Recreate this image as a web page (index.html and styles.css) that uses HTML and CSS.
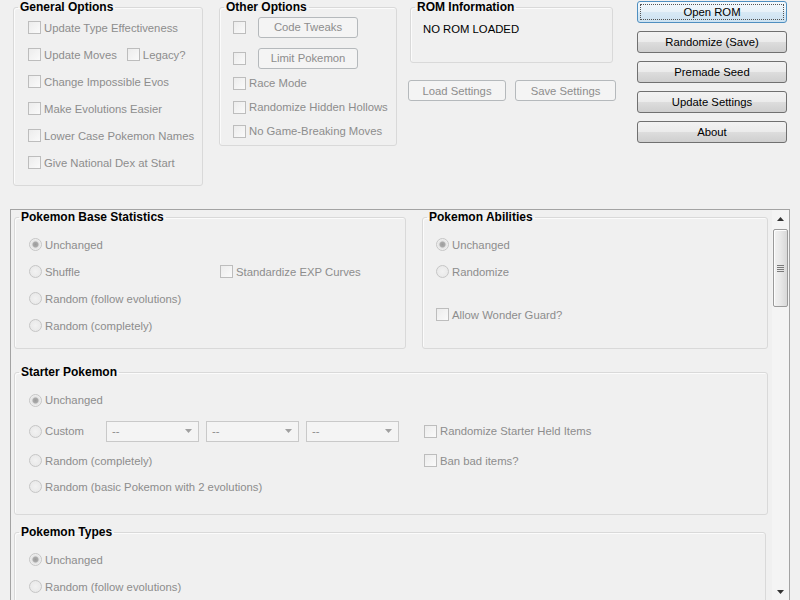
FILE: index.html
```html
<!DOCTYPE html>
<html lang="en">
<head>
    <meta charset="UTF-8">
    <title>Universal Pokemon Randomizer</title>
    <link rel="stylesheet" href="styles.css">
</head>
<body>
    <div class="top">
        <fieldset class="group general">
            <legend>General Options</legend>
            <div class="row"><span class="box"></span>Update Type Effectiveness</div>
            <div class="row"><span class="box"></span>Update Moves<span class="box legacy"></span>Legacy?</div>
            <div class="row"><span class="box"></span>Change Impossible Evos</div>
            <div class="row"><span class="box"></span>Make Evolutions Easier</div>
            <div class="row"><span class="box"></span>Lower Case Pokemon Names</div>
            <div class="row"><span class="box"></span>Give National Dex at Start</div>
        </fieldset>

        <fieldset class="group other">
            <legend>Other Options</legend>
            <div class="row tall"><span class="box"></span><button class="btn off small">Code Tweaks</button></div>
            <div class="row tall second"><span class="box"></span><button class="btn off small">Limit Pokemon</button></div>
            <div class="row short"><span class="box"></span>Race Mode</div>
            <div class="row short"><span class="box"></span>Randomize Hidden Hollows</div>
            <div class="row short"><span class="box"></span>No Game-Breaking Moves</div>
        </fieldset>

        <div class="rom-col">
            <fieldset class="group rom">
                <legend>ROM Information</legend>
                <p class="rom-name">NO ROM LOADED</p>
            </fieldset>
            <div class="settings-row">
                <button class="btn off load">Load Settings</button>
                <button class="btn off save">Save Settings</button>
            </div>
        </div>

        <div class="actions">
            <button class="btn focus">Open ROM</button>
            <button class="btn">Randomize (Save)</button>
            <button class="btn">Premade Seed</button>
            <button class="btn">Update Settings</button>
            <button class="btn">About</button>
        </div>
    </div>

    <div class="panel">
        <div class="panel-body">
            <div class="pair">
                <fieldset class="group stats">
                    <legend>Pokemon Base Statistics</legend>
                    <div class="row"><span class="dot on"></span>Unchanged</div>
                    <div class="row"><span class="cell"><span class="dot"></span>Shuffle</span><span class="box"></span>Standardize EXP Curves</div>
                    <div class="row"><span class="dot"></span>Random (follow evolutions)</div>
                    <div class="row"><span class="dot"></span>Random (completely)</div>
                </fieldset>
                <fieldset class="group abilities">
                    <legend>Pokemon Abilities</legend>
                    <div class="row"><span class="dot on"></span>Unchanged</div>
                    <div class="row"><span class="dot"></span>Randomize</div>
                    <div class="row gap"><span class="box"></span>Allow Wonder Guard?</div>
                </fieldset>
            </div>

            <fieldset class="group starter">
                <legend>Starter Pokemon</legend>
                <div class="row r1"><span class="dot on"></span>Unchanged</div>
                <div class="row r2">
                    <span class="left">
                        <span class="custom"><span class="dot"></span>Custom</span>
                        <span class="combo"><span class="combo-text">--</span><svg width="7" height="4" viewBox="0 0 7 4"><path d="M0 0h7L3.5 4z" fill="#a0a0a0"/></svg></span>
                        <span class="combo"><span class="combo-text">--</span><svg width="7" height="4" viewBox="0 0 7 4"><path d="M0 0h7L3.5 4z" fill="#a0a0a0"/></svg></span>
                        <span class="combo"><span class="combo-text">--</span><svg width="7" height="4" viewBox="0 0 7 4"><path d="M0 0h7L3.5 4z" fill="#a0a0a0"/></svg></span>
                    </span>
                    <span class="box"></span>Randomize Starter Held Items
                </div>
                <div class="row r3"><span class="left"><span class="dot"></span>Random (completely)</span><span class="box"></span>Ban bad items?</div>
                <div class="row r4"><span class="dot"></span>Random (basic Pokemon with 2 evolutions)</div>
            </fieldset>

            <fieldset class="group types">
                <legend>Pokemon Types</legend>
                <div class="row"><span class="dot on"></span>Unchanged</div>
                <div class="row"><span class="dot"></span>Random (follow evolutions)</div>
            </fieldset>
        </div>

        <div class="scrollbar">
            <div class="arrow"><svg width="7" height="4" viewBox="0 0 7 4"><path d="M3.5 0L7 4H0z" fill="#333"/></svg></div>
            <div class="thumb"><span class="grip"></span><span class="grip"></span><span class="grip"></span><span class="grip"></span></div>
            <div class="track"></div>
            <div class="arrow"><svg width="7" height="4" viewBox="0 0 7 4"><path d="M0 0h7L3.5 4z" fill="#333"/></svg></div>
        </div>
    </div>
</body>
</html>
```

FILE: styles.css
```css
* {
    box-sizing: border-box;
}

html, body {
    margin: 0;
    padding: 0;
    height: 600px;
    overflow: hidden;
}

body {
    background: #f0f0f0;
    font-family: 'Liberation Sans', Arial, sans-serif;
    font-size: 11.3px;
    color: #8d8d8d;
}

/* group boxes */
.group {
    margin: 0;
    padding: 0;
    min-width: 0;
    border: 1px solid #d9d9d9;
    border-radius: 3px;
    box-shadow: inset 1px 1px 0 #fbfbfb;
}

.group legend {
    margin-left: 4px;
    padding: 0 2px;
    font-size: 12px;
    font-weight: bold;
    line-height: 14px;
    color: #000;
}

.row {
    display: flex;
    align-items: center;
    height: 27px;
    white-space: nowrap;
}

.box {
    width: 13px;
    height: 13px;
    flex: none;
    border: 1px solid #bdbdbd;
    background: linear-gradient(135deg, #ececec, #fafafa);
    margin-right: 3px;
}

.dot {
    width: 13px;
    height: 13px;
    flex: none;
    border: 1px solid #c6c6c6;
    border-radius: 50%;
    background: radial-gradient(circle, #f2f2f2 0, #e6e6e6 100%);
    margin-right: 3px;
}

.dot.on {
    background: radial-gradient(circle, #9c9c9c 0, #aaaaaa 2.5px, #e2e2e2 3.5px, #f4f4f4 6px);
}

/* buttons */
.btn {
    display: flex;
    align-items: center;
    justify-content: center;
    height: 22px;
    padding: 0;
    border: 1px solid #707070;
    border-radius: 3px;
    background: linear-gradient(#f2f2f2 0%, #ebebeb 50%, #dddddd 50%, #cfcfcf 100%);
    font: inherit;
    color: #000;
}

.btn.off {
    border-color: #b5b9bc;
    background: #f4f4f4;
    color: #8d8d8d;
}

.btn.focus {
    border-color: #4f8fc0;
    background: linear-gradient(#f3f9fd 0%, #e8f2f9 50%, #d8e9f5 50%, #cde2f1 100%);
    outline: 1px dotted #555;
    outline-offset: -4px;
}

/* top area */
.top {
    display: flex;
    height: 209px;
    padding-left: 13px;
}

.general {
    width: 190px;
    height: 186px;
}

.general .box:first-child {
    margin-left: 14px;
}

.general .legacy {
    margin-left: 10px;
}

.other {
    width: 178px;
    height: 146px;
    margin-left: 16px;
}

.other .box {
    margin-left: 13px;
}

.other .row.tall {
    height: 26px;
}

.other .row.second {
    margin-top: 5px;
}

.other .row.short {
    height: 24px;
}

.btn.small {
    width: 100px;
    height: 21px;
    margin-left: 9px;
}

.rom-col {
    width: 208px;
    margin-left: 11px;
}

.rom {
    width: 203px;
    height: 63px;
    margin-left: 2px;
}

.rom-name {
    margin: 8px 0 0 12px;
    line-height: 14px;
    color: #000;
}

.settings-row {
    display: flex;
    gap: 9px;
    margin-top: 17px;
}

.settings-row .btn {
    height: 21px;
}

.load {
    width: 98px;
}

.save {
    width: 101px;
}

.actions {
    display: flex;
    flex-direction: column;
    gap: 8px;
    width: 150px;
    margin-left: 21px;
    padding-top: 1px;
}

/* scrolling panel */
.panel {
    display: flex;
    width: 780px;
    height: 391px;
    margin-left: 10px;
    border: 1px solid #a3a3a3;
    border-bottom: none;
}

.panel-body {
    flex: 1;
    padding: 0 2px 0 3px;
    overflow: hidden;
}

.pair {
    display: flex;
}

.stats {
    width: 392px;
    height: 139px;
}

.stats .row,
.abilities .row,
.types .row {
    padding-left: 14px;
}

.stats .row:first-of-type,
.abilities .row:first-of-type,
.types .row:first-of-type {
    margin-top: 7px;
}

.cell {
    display: flex;
    align-items: center;
    width: 191px;
}

.abilities {
    width: 346px;
    height: 139px;
    margin-left: 16px;
}

.abilities .row {
    padding-left: 13px;
}

.abilities .row.gap {
    margin-top: 16px;
}

.starter {
    width: 754px;
    height: 150px;
    margin-top: 16px;
}

.starter .row {
    padding-left: 14px;
}

.starter .r1 {
    margin-top: 7px;
    height: 28px;
}

.starter .r2 {
    height: 34px;
}

.starter .r3 {
    height: 25px;
}

.starter .r4 {
    height: 27px;
}

.left {
    display: flex;
    align-items: center;
    width: 395px;
}

.custom {
    display: flex;
    align-items: center;
    width: 77px;
}

.combo {
    display: flex;
    align-items: center;
    width: 93px;
    height: 21px;
    margin-right: 7px;
    padding: 0 6px 0 5px;
    border: 1px solid #c9c9c9;
    background: #f4f4f4;
}

.combo-text {
    flex: 1;
}

.types {
    width: 752px;
    height: 120px;
    margin-top: 10px;
}

/* scrollbar */
.scrollbar {
    display: flex;
    flex-direction: column;
    width: 17px;
    background: #f4f4f4;
}

.arrow {
    display: flex;
    align-items: center;
    justify-content: center;
    height: 17px;
    flex: none;
}

.thumb {
    display: flex;
    flex-direction: column;
    align-items: center;
    justify-content: center;
    gap: 1px;
    width: 15px;
    height: 78px;
    margin: 2px 0 0 1px;
    border: 1px solid #9a9a9a;
    border-radius: 2px;
    background: linear-gradient(to right, #f2f2f2, #e8e8e8 50%, #d8d8d8);
    box-shadow: inset 1px 1px 0 #fdfdfd;
}

.grip {
    width: 7px;
    height: 1px;
    background: #7a7a7a;
}

.track {
    flex: 1;
}
```
